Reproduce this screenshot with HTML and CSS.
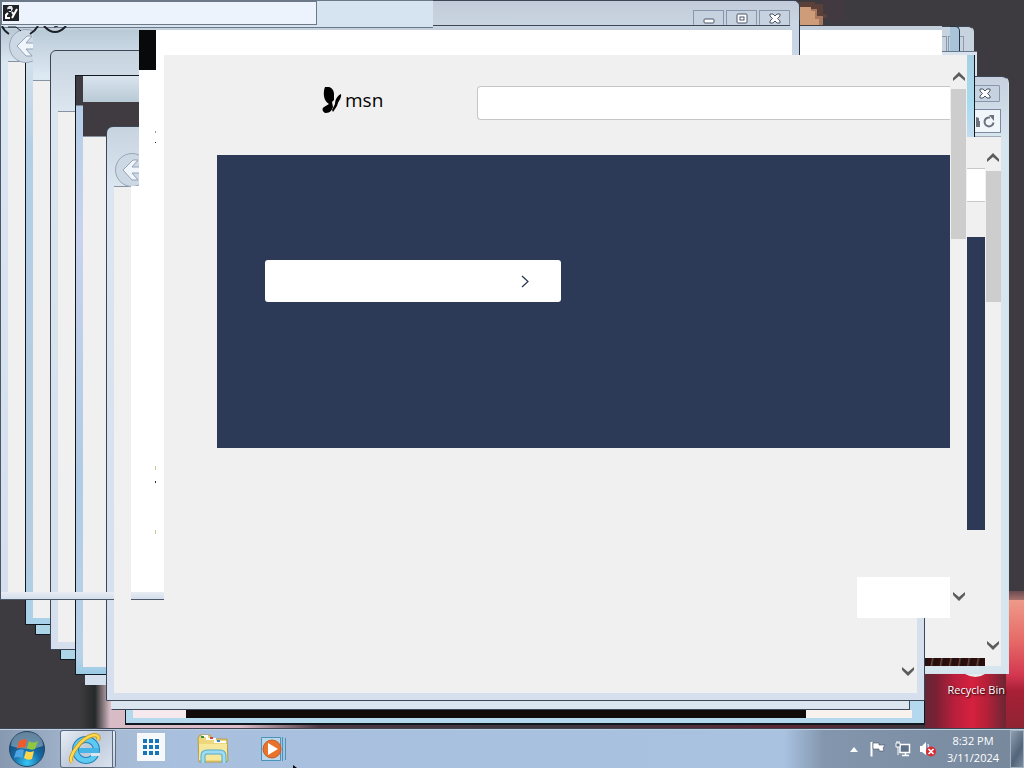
FILE: index.html
```html
<!DOCTYPE html>
<html lang="en">
<head>
<meta charset="utf-8">
<title>Desktop</title>
<link rel="stylesheet" href="styles.css">
</head>
<body>
<svg class="defs" aria-hidden="true">
  <symbol id="up" viewBox="0 0 12 9"><path d="M0 6L6 0l6 6v3L6 4 0 9z" fill="#5c5c5c"/></symbol>
  <symbol id="down" viewBox="0 0 12 9"><path d="M0 0l6 5 6-5v3L6 9 0 3z" fill="#5c5c5c"/></symbol>
  <symbol id="close" viewBox="0 0 12 11"><path d="M1 1h3l2 2 2-2h3v2L8.500 5.500 11 8v2H8L6 8l-2 2H1V8l2.500-2.500L1 3z" fill="#fff" stroke="#4a5568"/></symbol>
  <symbol id="back" viewBox="0 0 34 36"><circle cx="17" cy="18" r="16.500" fill="#ccd9e4" stroke="#98a5b8"/><path d="M18 8h5l-6 7h13v6H17l6 7h-6l-9-10z" fill="#f0f5fb" stroke="#94a1b5"/></symbol>
</svg>
<main class="desktop">
  <svg class="art art-top" viewBox="0 0 60 28" aria-hidden="true"><path fill="#433941" d="M24 0h22v20H24z"/><path fill="#5a4038" d="M0 2h16v2h8v10h4v4H0z"/><path fill="#cf9c7a" d="M0 7h12v4h4v8h4v6H0z"/><path fill="#a77860" d="M12 9h6v7h6v9h-4v-6h-4v-8h-4z"/></svg>
  <div class="art art-red"></div>
  <div class="art art-bottom"></div>
  <svg class="art bin" viewBox="0 0 20 4" aria-hidden="true"><path d="M0 0h20q-9 6-20 0z" fill="#e8ecec"/></svg>
  <a class="recycle" href="#"><span>Recycle Bin</span></a>

  <section class="win right-win">
    <div class="right-caption"><button class="cap" aria-label="Close"><svg width="12" height="11"><use href="#close"/></svg></button></div>
    <div class="right-address">
      <svg width="5" height="12" viewBox="0 0 5 12" aria-hidden="true"><path d="M0 2l3 1v3h1v6H0z" fill="#6f747c"/></svg>
      <button aria-label="Refresh"><svg width="12" height="13" viewBox="0 0 12 13"><path d="M7 2.500a4.500 4.500 0 1 0 3.500 5" fill="none" stroke="#6b727c" stroke-width="2"/><path d="M6 0h5v6z" fill="#6b727c"/></svg></button>
    </div>
    <div class="right-body">
      <div class="right-page"><div class="right-search"></div><div class="right-hero"></div><div class="grain"></div></div>
      <div class="scroll"><button aria-label="Scroll up"><svg width="12" height="9"><use href="#up"/></svg></button><div class="thumb"></div><button class="end" aria-label="Scroll down"><svg width="12" height="9"><use href="#down"/></svg></button></div>
    </div>
  </section>

  <div class="win win-e"><div class="edge-btn"></div><div class="edge-btn"></div></div>
  <div class="ghost ghost-a"></div><div class="ghost ghost-b"></div><div class="ghost ghost-c"></div>

  <section class="win win-1"><div class="win-body"></div></section>
  <div class="stub stub-a"></div><div class="stub stub-b"></div><div class="stub stub-c"></div>
  <section class="win win-2"><div class="win-body"></div></section>
  <div class="mark"></div>
  <svg class="nav nav-1" width="34" height="36" aria-hidden="true"><use href="#back"/></svg>
  <section class="win win-3"><div class="win-body"></div></section>
  <section class="win win-4"><div class="win-glass"></div><div class="win-dark"></div><div class="win-body"></div></section>
  <div class="win win-6"><div class="win-6-page"></div></div>
  <div class="win win-7"></div>
  <section class="win win-5">
    <svg class="win-back" width="34" height="36" aria-hidden="true"><use href="#back"/></svg>
    <div class="win-body"><button aria-label="Scroll down"><svg width="12" height="9"><use href="#down"/></svg></button></div>
  </section>
  <div class="trail-frame"></div>
  <div class="trail-frame trail-frame-end"></div>
  <div class="trail-column"></div>

  <header class="win titlebar">
    <div class="cap-row">
      <button class="cap" aria-label="Minimize"><svg width="12" height="11" viewBox="0 0 12 11"><rect x="1" y="6" width="10" height="4" rx="1" fill="#fff" stroke="#4a5568"/></svg></button>
      <button class="cap" aria-label="Restore"><svg width="12" height="11" viewBox="0 0 12 11"><rect x="1" y="1" width="10" height="9" rx="1" fill="#fff" stroke="#4a5568"/><rect x="4" y="4" width="4" height="3" fill="#fff" stroke="#4a5568"/></svg></button>
      <button class="cap" aria-label="Close"><svg width="12" height="11"><use href="#close"/></svg></button>
    </div>
  </header>
  <div class="title-left"><label class="address">
    <svg width="16" height="16" viewBox="0 0 16 16" aria-hidden="true"><path fill="#202225" d="M0 0h16v16H0z"/><path d="M4 3l2-2h3l1 3-2 3H6z" fill="#dfe4e8"/><path d="M14 4l-5 9M9 7l2 3M5 8l-2 2v3h4" fill="none" stroke="#fff" stroke-width="2"/><path d="M5 4h3v2H5z" fill="#202225"/></svg>
    <input type="text" aria-label="Address">
  </label></div>
  <svg class="nav nav-arcs" width="68" height="10" viewBox="0 0 68 10" aria-hidden="true"><path d="M2 0q2 5 7 8M38 0q-3 5-8 8M44 0q11 12 22 0" fill="none" stroke="#1b2027" stroke-width="2"/><path d="M8 1h8l5 4M54 1l4-1" fill="none" stroke="#1b2027"/></svg>
  <div class="white-band"></div>
  <div class="white-side"><i class="speck speck-a"></i><i class="speck speck-b"></i><i class="speck speck-c"></i><i class="speck speck-d"></i><i class="speck speck-e"></i></div>
  <div class="band-edge"></div>
  <div class="black-tab"></div>
  <div class="main-edge"></div>

  <section class="main-pane">
    <div class="page">
      <div class="page-head">
        <a class="logo" href="#"><svg width="20" height="26" viewBox="0 0 20 26" aria-hidden="true"><path d="M3 0C8-1 12 2 12 7v6l-2 2 1 5c-1 3-3 6-7 6-3 0-5-4-2-6l5-3C1 14 1 5 3 0z"/><path d="M19 7c1 4-3 7-4 12l-4 6-1-2 3-6c0-4 2-8 6-10z"/></svg><span>msn</span></a>
        <input class="search" type="search" aria-label="Search the web">
      </div>
      <div class="hero"><button class="hero-btn" aria-label="Continue"><svg width="8" height="13" viewBox="0 0 8 13"><path d="M1 1l6 5.500L1 12" fill="none" stroke="#26324c" stroke-width="1.200"/></svg></button></div>
      <div class="feedback"></div>
    </div>
    <div class="scroll"><button aria-label="Scroll page up"><svg width="12" height="9"><use href="#up"/></svg></button><div class="thumb"></div><button class="end" aria-label="Scroll page down"><svg width="12" height="9"><use href="#down"/></svg></button></div>
  </section>
</main>

<footer class="taskbar">
  <button class="start" aria-label="Start"><svg width="38" height="38" viewBox="0 0 38 38">
    <defs><radialGradient id="orb" cx=".5" cy=".9" r=".9"><stop offset="0" stop-color="#37c6f5"/><stop offset=".45" stop-color="#156aa5"/><stop offset="1" stop-color="#173b5c"/></radialGradient></defs>
    <circle cx="19" cy="19" r="17.500" fill="url(#orb)" stroke="#244866"/><path d="M3 16a16 14 0 0 1 32 0q-16 6-32 0z" fill="#a6bccb" opacity=".55"/>
    <path d="M11 11q4-3 8-1l-2 8q-4-2-8 1z" fill="#ef5b2b"/><path d="M21 11q4 3 9 0l-3 8q-4 2-8-1z" fill="#91c73e"/><path d="M8 21q4-3 8-1l-2 8q-4-2-8 0z" fill="#4da5e3"/><path d="M18 21q4 2 8 0l-2 8q-4 2-8-1z" fill="#fdd64b"/></svg></button>
  <button class="task active" aria-label="Internet Explorer"><svg width="32" height="32" viewBox="0 0 32 32">
    <circle cx="17" cy="17" r="10.500" fill="none" stroke="#237eb5" stroke-width="7"/><circle cx="17" cy="17" r="10.500" fill="none" stroke="#5ccaf1" stroke-width="5"/><path d="M10 15h20v5H10z" fill="#43b4e5"/><path d="M22 20h9v3h-9z" fill="#dce4ee"/>
    <path d="M3 29C-2 25 12 4 25 2q6 0 4 5" fill="none" stroke="#c39219" stroke-width="4"/><path d="M3 29C-2 25 12 4 25 2q6 0 4 5" fill="none" stroke="#ffd84c" stroke-width="2.500"/></svg></button>
  <button class="task apps" aria-label="Apps"><svg width="28" height="28" viewBox="0 0 28 28"><path d="M0 0h28v28H0z" fill="#f7f8fa"/><path fill="#1874b9" d="M6 6h4v4H6zM12 6h4v4h-4zM18 6h4v4h-4zM6 12h4v4H6zM12 12h4v4h-4zM18 12h4v4h-4zM6 18h4v4H6zM12 18h4v4h-4zM18 18h4v4h-4z"/></svg></button>
  <button class="task" aria-label="Windows Explorer"><svg width="32" height="30" viewBox="0 0 32 30"><path d="M1 4l2-3h10l2 4h15l1 22-3 1H2z" fill="#edd67b" stroke="#b99b45"/><path d="M5 2h5v3h8v3h11" fill="none" stroke="#fff" stroke-width="2"/><path d="M4 2h3v2H4z" fill="#3b8e45"/><path d="M13 3h3v2h-3z" fill="#cb4c32"/><path d="M20 6h3v2h-3z" fill="#3b86c0"/><path d="M2 10h28v16H2z" fill="#f5e79c"/><path d="M6 29v-7q0-4 4-4h13q4 0 4 4v7" fill="none" stroke="#57a9cf" stroke-width="5"/><path d="M6 29v-7q0-4 4-4h13q4 0 4 4v7" fill="none" stroke="#9edcf0" stroke-width="3"/></svg></button>
  <button class="task media" aria-label="Windows Media Player"><svg width="26" height="26" viewBox="0 0 26 26"><path d="M.5 1.500h19v23H.5z" fill="#b9d8ec" stroke="#4b94b9"/><path d="M21.500 1v24M24.500 2v22" stroke="#4b94b9"/><circle cx="11" cy="13" r="9" fill="#e9732b" stroke="#c85b20"/><path d="M7 7l10 6-10 6z" fill="#fff"/></svg></button>
  <svg class="pointer" width="4" height="3" viewBox="0 0 4 3" aria-hidden="true"><path d="M0 0l4 3H0z"/></svg>
  <div class="tray">
    <button aria-label="Show hidden icons"><svg width="8" height="5" viewBox="0 0 8 5"><path d="M4 0l4 5H0z" fill="#fff"/></svg></button>
    <button aria-label="Action Center"><svg width="16" height="16" viewBox="0 0 16 16"><path d="M1.500 1v14.500" stroke="#fff" stroke-width="2"/><path d="M3 2h6v2h6l-2 3 1 3H9V8H3z" fill="#fff" stroke="#445267" stroke-width=".6"/></svg></button>
    <button aria-label="Network"><svg width="16" height="16" viewBox="0 0 16 16"><path d="M5 3.500h9.500v8H5zM7 14.500h7M10.500 11v3" fill="#5f7288" stroke="#fff" stroke-width="1.500"/><path d="M1 2h4v4H1zM2 0v2M4 0v2M3 6v8" fill="#5f7288" stroke="#fff"/></svg></button>
    <button aria-label="Volume muted"><svg width="16" height="16" viewBox="0 0 16 16"><path d="M0 5h2l4-4v13l-4-3H0z" fill="#fff"/><path d="M8 3q1 4 0 9" stroke="#fff" fill="none"/><circle cx="11" cy="10.500" r="5" fill="#d92c32"/><path d="M8.500 8l5 5M13.500 8l-5 5" stroke="#fff" stroke-width="1.600"/></svg></button>
    <div class="clock"><time>8:32 PM</time><span>3/11/2024</span></div>
    <button class="peek" aria-label="Show desktop"></button>
  </div>
</footer>
</body>
</html>
```
FILE: styles.css
```css
* { box-sizing: border-box; }
body {
  margin: 0;
  height: 100vh;
  display: flex;
  flex-direction: column;
  overflow: hidden;
  font-family: "Open Sans", "Noto Sans", sans-serif;
  font-size: 11px;
}
button { padding: 0; border: 0; background: none; display: flex; align-items: center; justify-content: center; }
svg { display: block; }
.defs { position: absolute; width: 0; height: 0; }

.desktop { position: relative; flex: 1; overflow: hidden; background: #3e3b40; }
.desktop > * { position: absolute; }

/* Wallpaper */
.art-top { left: 799px; top: 0; width: 60px; height: 28px; }
.art-red {
  right: 0; bottom: 0; width: 104px; height: 138px;
  background:
    linear-gradient(#6a4a50, #a8706c 9px),
    linear-gradient(#ee9a88 9px, #e66a66 50px, #d33850 84px, #a82036 100px, #8e2433),
    linear-gradient(90deg, #5a2b38 0, #7a2034 16px, #b81f3c 34px, #d5213f 52px, #b82038 66px, #6b2635 86px);
  background-size: 18px 9px, 18px 100%, 100% 100%;
  background-position: right top;
  background-repeat: no-repeat;
}
.art-bottom { left: 80px; right: 99px; bottom: 0; height: 46px; background: linear-gradient(90deg, #3e3b40, #25292a 15px, #d8bcc5 30px, #ddbdca 160px, #4d3742 240px, #3e3840 480px, #5d2735 700px, #3e353c); }
.bin { right: 39px; bottom: 51px; width: 20px; height: 4px; }
.recycle { right: 19px; bottom: 32px; color: #fff; text-decoration: none; text-shadow: 1px 1px 2px #000; line-height: 15px; }

/* Window frames */
.win { border: 1px solid #3c4657; background: linear-gradient(#c7d3df, #dbe6f0 60px, #d5dfed); }
.win-body { background: #f0f0f0; height: 100%; border-top: 1px solid #8793a2; }

.right-win {
  left: 900px; right: 15px; top: 76px; bottom: 55px;
  border-color: #d5e0ea; border-top-color: #3c4657; border-radius: 0 7px 0 0;
  background: linear-gradient(#c7d0df, #d7e5ef 60px);
  padding: 8px 7px 7px 0; display: flex; flex-direction: column;
}
.right-caption { display: flex; justify-content: flex-end; padding-right: 1px; }
.cap { width: 31px; height: 17px; border: 1px solid #8796ac; border-radius: 1px; background: #c6d2e0; }
.right-address { height: 24px; margin: 7px 0 3px; border: 1px solid #7c899e; background: #f1f6fb; display: flex; align-items: center; justify-content: flex-end; gap: 2px; padding-right: 5px; }
.right-body { flex: 1; display: flex; background: #f0f0f0; border-top: 1px solid #a3adb9; }
.right-page { flex: 1; display: flex; flex-direction: column; padding-top: 31px; }
.right-search { height: 34px; background: #fff; border: solid #c8c8c8; border-width: 1px 0; }
.right-hero { height: 293px; margin-top: 35px; background: #2d3a57; }
.grain { height: 8px; margin-top: auto; background: repeating-linear-gradient(100deg, #300d0c 0 3px, #6b4940 4px, #21100e 6px 9px); }
.scroll { width: 16px; display: flex; flex-direction: column; align-items: center; }
.scroll .thumb { width: 15px; background: #cdcdcd; }
.scroll button { width: 16px; height: 17px; }
.scroll .end { margin-top: auto; }
.right-body .scroll { padding: 12px 0; }
.right-body .thumb { height: 131px; margin-top: 5px; }

.win-e { left: 900px; top: 26px; right: 50px; height: 29px; border-color: #c8d2de; border-top-color: #3c4657; border-radius: 0 6px 0 0; display: flex; justify-content: flex-end; gap: 1px; padding: 9px 9px 0 0; background: #c8d3e0; }
.edge-btn { width: 16px; height: 15px; border: 1px solid #8999ae; border-bottom: 0; }
.ghost-a { left: 950px; top: 26px; width: 10px; height: 25px; border: solid #233446; border-width: 1px 1px 0 0; border-radius: 0 5px 0 0; background: #a9c4d8; }
.ghost-b { left: 942px; top: 51px; width: 35px; height: 4px; background: #d9e3ed; border-top: 1px solid #66768b; }
.ghost-c { left: 967px; top: 54px; width: 10px; height: 22px; background: #d9e3ed; }

.win-1 { left: 0; width: 140px; top: -1px; bottom: 129px; padding: 61px 0 7px 7px; border-color: #49566a; background: linear-gradient(#d5e2ef 26px, #bac9d6 30px, #dae6f0 62px, #d5dfee); }
.nav-arcs { left: 0; top: 26px; }
.nav-1 { left: 9px; top: 28px; clip-path: inset(0 10px 0 0); }
.win-2 { left: 25px; width: 30px; top: 55px; bottom: 104px; border-color: #101820; border-top: 0; padding: 25px 0 6px 7px; background: linear-gradient(#d5e2ec, #b4cfe6 90px, #b5cce1 500px, #a9d2ea); }
.mark { left: 33px; top: 30px; width: 106px; height: 51px; background: linear-gradient(#b9cad7, #dce8f2 45px); border-bottom: 1px solid #8793a2; }
.win-3 { left: 50px; width: 90px; top: 50px; bottom: 79px; padding: 60px 0 7px 7px; border-radius: 6px 0 0; }
.win-4 { left: 75px; width: 70px; top: 75px; bottom: 54px; padding: 0 0 7px 7px; display: flex; flex-direction: column; border-color: #101820; background: linear-gradient(#3e3b43 29px, #b5cee7 30px, #c9d3ed 160px, #b0cbe5 400px, #b8d3e8 580px, #9bcbe5); }
.win-4 .win-glass { height: 26px; background: linear-gradient(#d9e4ee, #b9cad6); }
.win-4 .win-dark { height: 34px; background: #403b41; }
.win-4 .win-body { flex: 1; height: auto; }
.win-5 { left: 106px; right: 99px; top: 126px; bottom: 28px; padding: 59px 7px 7px; border-radius: 7px 0 0; }
.win-5 .win-body { display: flex; justify-content: flex-end; align-items: flex-end; padding: 0 3px 17px; }
.win-back { position: absolute; left: 8px; top: 25px; }
.win-6 { left: 125px; right: 99px; bottom: 4px; height: 28px; padding: 12px 12px 6px 7px; border-width: 1px 1px 2px; border-color: #101820; background: #b4d9ee; }
.win-6-page { height: 8px; background: linear-gradient(90deg, #f5e9ed 53px, #100b0a 53px calc(100% - 106px), #f8f2ee calc(100% - 106px)); }
.win-7 { left: 111px; right: 114px; bottom: 19px; height: 11px; background: #dbe5ef; border-left-color: #dbe5ef; }
.stub { width: 50px; height: 11px; border: solid #101820; border-width: 0 0 1px 1px; background: #acd5e6; }
.stub-a { left: 35px; bottom: 94px; }
.stub-b { left: 60px; bottom: 69px; }
.stub-c { left: 85px; bottom: 44px; background: #d5e0ef; border-color: #d5e0ef; }

/* Repaint trails */
.trail-frame { left: 1px; width: 113px; top: 592px; height: 8px; background: linear-gradient(#e8edf4, #d4deeb); border-bottom: 1px solid #4b596b; }
.trail-frame-end { left: 131px; width: 33px; }
.trail-column { left: 131px; width: 33px; top: 186px; height: 406px; background: #fff; }
.white-side { left: 139px; width: 25px; top: 55px; height: 537px; background: #fff; }
.speck { position: absolute; left: 16px; width: 1px; height: 2px; background: #ccc58f; }
.speck-a { top: 76px; background: #8a96a2; }
.speck-b { top: 87px; height: 1px; background: #222; }
.speck-c { top: 411px; height: 4px; }
.speck-d { top: 426px; background: #333; }
.speck-e { top: 475px; height: 4px; }

/* Top strips */
.titlebar { left: 33px; width: 767px; top: 0; height: 30px; border-radius: 0 6px 0 0; border-bottom: 0; border-left: 0; padding: 9px 9px 0; background: linear-gradient(#c3cbda, #c9d6e0 25px, #c3cfda); }
.cap-row { display: flex; justify-content: flex-end; gap: 2px; border-bottom: 1px solid #3c4657; }
.titlebar .cap { height: 15px; border-bottom: 0; }
.title-left { left: 0; width: 433px; top: 0; height: 28px; background: #d6e3f1; border: 1px solid #6b7889; border-right: 0; }
.address { display: flex; align-items: center; width: 316px; height: 24px; padding-left: 1px; border: 1px solid #6f7985; background: #edf3fc; }
.address input { flex: 1; min-width: 0; border: 0; background: none; }
.white-band { left: 139px; top: 30px; width: 803px; height: 25px; background: #fff; box-shadow: 0 -4px #c3cfda; clip-path: polygon(0 0, 661px 0, 661px -4px, 100% -4px, 100% 100%, 0 100%); }
.band-edge { left: 792px; top: 20px; width: 8px; height: 35px; background: #cbd6e4; border-right: 1px solid #28354a; }
.black-tab { left: 139px; top: 30px; width: 17px; height: 40px; background: #07090b; }
.main-edge { left: 967px; top: 55px; width: 8px; height: 82px; background: linear-gradient(#a7cfe2, #a9dcf1 50px, #c5dcef); border-right: 1px solid #101820; }

/* Browser page */
.main-pane { left: 164px; right: 57px; top: 55px; bottom: 111px; display: flex; background: #f0f0f0; }
.page { flex: 1; display: flex; flex-direction: column; padding: 31px 0 0 53px; }
.page-head { display: flex; align-items: center; height: 34px; padding-left: 105px; }
.logo { width: 155px; display: flex; align-items: center; gap: 3px; color: #000; text-decoration: none; font-size: 19px; line-height: 26px; padding-bottom: 6px; }
.search { flex: 1; min-width: 0; height: 34px; border: 1px solid #c6c6c6; border-right: 0; border-radius: 4px 0 0 4px; background: #fff; }
.hero { height: 293px; margin-top: 35px; padding: 105px 48px; background: #2d3a57; }
.hero-btn { width: 296px; height: 42px; border-radius: 3px; background: #fff; justify-content: flex-end; padding-right: 32px; }
.feedback { width: 93px; height: 41px; margin-top: auto; align-self: flex-end; background: #fff; }
.main-pane .scroll { padding: 13px 0; width: 17px; }
.main-pane .thumb { height: 150px; margin-top: 4px; }
.main-pane { padding-bottom: 0; }

/* Taskbar */
.taskbar { height: 39px; display: flex; align-items: center; border-top: 1px solid #c0cfe0; box-shadow: 0 -1px #3d4653; background: linear-gradient(90deg, #8799b0, #a6b8d0 80px, #a8c0de 180px, #a8c2e0 calc(100% - 240px), #8396ad calc(100% - 200px), #77889c); z-index: 1; }
.start { width: 38px; height: 38px; margin-left: 8px; }
.task { width: 32px; height: 36px; margin-left: 32px; }
.task.active { width: 56px; height: 38px; margin-left: 14px; padding-right: 4px; border: 1px solid #5a6b80; border-right: 4px double #5a6b80; border-radius: 3px; background: linear-gradient(135deg, #e9eef5, #bdc9da 50%, #dae2ee); }
.task.apps { width: 28px; margin-left: 21px; }
.task.media { width: 26px; }
.apps svg { margin-bottom: 4px; }
.pointer { align-self: flex-end; margin-left: 6px; }
.tray { margin-left: auto; display: flex; align-items: center; gap: 9px; height: 100%; }
.tray button:first-child { margin-right: 3px; }
.clock { display: flex; flex-direction: column; align-items: center; width: 56px; color: #fff; line-height: 17px; }
.tray .peek { width: 14px; height: 38px; border: 1px solid #a5b2c1; background: linear-gradient(120deg, #8f9fb0, #52647a 60%, #7b8c9f); }
```
